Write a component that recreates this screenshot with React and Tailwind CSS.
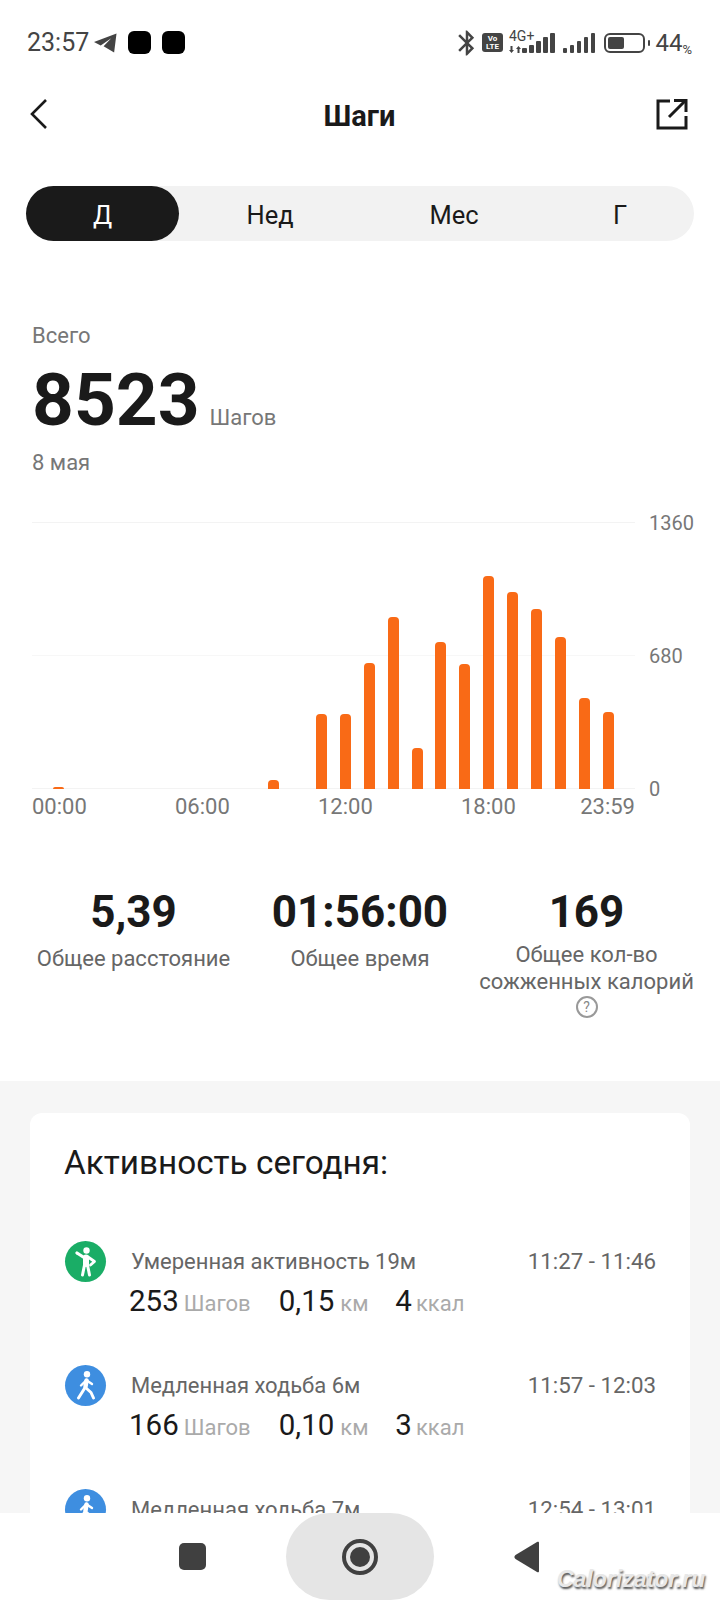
import React from 'react';
import { MdBluetooth } from 'react-icons/md';

const bars = [2, 0, 0, 0, 0, 0, 0, 0, 0, 9, 0, 75, 75, 126, 172, 41, 147, 125, 213, 197, 180, 152, 91, 77];

const activities = [
  { kind: 'green', title: 'Умеренная активность 19м', time: '11:27 - 11:46', steps: '253', km: '0,15', kcal: '4' },
  { kind: 'blue', title: 'Медленная ходьба 6м', time: '11:57 - 12:03', steps: '166', km: '0,10', kcal: '3' },
  { kind: 'blue', title: 'Медленная ходьба 7м', time: '12:54 - 13:01' },
];

function SignalBars({ heights }) {
  return (
    <div className="flex items-end gap-[2.5px]">
      {heights.map((h, i) => (
        <div key={i} className="w-[4.5px] rounded-[1px] bg-[#444]" style={{ height: h }} />
      ))}
    </div>
  );
}

function StatusBar() {
  return (
    <div className="h-[85px] shrink-0 flex items-center justify-between pl-[27px] pr-[28px] text-[#444]">
      <div className="flex items-center">
        <span className="text-[25px] leading-none">23:57</span>
        <svg className="ml-[5px]" width="23" height="20" viewBox="0 0 24 20" fill="#444">
          <path d="M23.5 0 L0 9 L7 12.5 L18 5 L10 13.5 L21 20 Z" />
        </svg>
        <div className="ml-[11px] w-[23px] h-[23px] rounded-[6px] bg-black" />
        <div className="ml-[11px] w-[23px] h-[23px] rounded-[6px] bg-black" />
      </div>
      <div className="flex items-center">
        <MdBluetooth className="w-[30px] h-[30px]" />
        <div className="w-[21px] h-[19px] rounded-[3px] bg-[#444] flex flex-col items-center justify-center text-white text-[8px] leading-[8px] font-bold">
          <span>Vo</span>
          <span>LTE</span>
        </div>
        <div className="ml-[6px] relative w-[46px] h-[21px] flex items-end justify-end">
          <span className="absolute left-0 -top-[3px] text-[14px] leading-none">4G+</span>
          <svg className="absolute left-0 bottom-0" width="12" height="7" viewBox="0 0 12 7" fill="#444">
            <path d="M0 4 L2.5 7 L5 4 L3.5 4 L3.5 0 L1.5 0 L1.5 4 Z" />
            <path d="M7 3 L9.5 0 L12 3 L10.5 3 L10.5 7 L8.5 7 L8.5 3 Z" />
          </svg>
          <SignalBars heights={[5, 8, 12, 16, 20]} />
        </div>
        <div className="ml-[8px]">
          <SignalBars heights={[5, 8, 12, 16, 20]} />
        </div>
        <div className="ml-[9px] w-[41px] h-[20px] rounded-[6px] border-2 border-[#444] p-[2px]">
          <div className="w-[16px] h-full rounded-[2px] bg-[#444]" />
        </div>
        <div className="ml-[3px] w-[2px] h-[6px] rounded-[1px] bg-[#444]" />
        <span className="ml-[5px] text-[24px] leading-none">44</span>
        <span className="text-[13px] leading-none self-end mb-[2px]">%</span>
      </div>
    </div>
  );
}

function Header() {
  return (
    <div className="h-[58px] shrink-0 flex items-center justify-between pl-[27px] pr-[32px]">
      <div className="w-[34px]">
        <svg width="24" height="34" viewBox="0 0 24 34" fill="none" stroke="#1a1a1a" strokeWidth="2.6">
          <path d="M19 3 L5 17 L19 31" />
        </svg>
      </div>
      <div className="mt-[4px] ml-[4px] text-[29px] font-bold text-[#1a1a1a] leading-none">Шаги</div>
      <div className="w-[34px] flex justify-end">
        <svg width="32" height="32" viewBox="0 0 32 32" fill="none" stroke="#1a1a1a" strokeWidth="3">
          <path d="M14 3 H2 V30 H30 V18" />
          <path d="M13 19 L29 3" />
          <path d="M18 2.5 H30 V14" />
        </svg>
      </div>
    </div>
  );
}

function Tabs() {
  return (
    <div className="mt-[43px] mx-[26px] h-[55px] shrink-0 rounded-full bg-[#f2f2f2] flex items-center text-[25.5px] text-[#1a1a1a]">
      <div className="w-[153px] h-full rounded-full bg-[#1a1a1a] text-white flex items-center justify-center pt-[3px]">Д</div>
      <div className="w-[184px] text-center pr-[2px] pt-[3px]">Нед</div>
      <div className="w-[184px] text-center pr-[2px] pt-[3px]">Мес</div>
      <div className="w-[147px] text-center pr-[1px] pt-[3px]">Г</div>
    </div>
  );
}

function Chart() {
  return (
    <div className="mt-[45px] ml-[32px] mr-[26px] shrink-0">
      <div className="flex">
        <div className="relative w-[603px] h-[267px] flex flex-col justify-between">
          <div className="h-px bg-[#f3f3f3]" />
          <div className="h-px bg-[#f7f7f7]" />
          <div className="h-px bg-[#f3f3f3]" />
          <div className="absolute inset-x-0 bottom-0 top-0 px-[15px] flex items-end">
            {bars.map((h, i) => (
              <div key={i} className="flex-1 flex justify-center">
                {h > 0 && <div className="w-[11px] rounded-t-[4px] bg-[#f96a16]" style={{ height: h }} />}
              </div>
            ))}
          </div>
        </div>
        <div className="ml-[14px] h-[267px] pt-[1px] flex flex-col justify-between text-[20px] leading-[0px] text-[#777]">
          <span>1360</span>
          <span>680</span>
          <span>0</span>
        </div>
      </div>
      <div className="w-[603px] mt-[5px] flex text-[22px] leading-[26px] text-[#777]">
        <span className="w-[143px]">00:00</span>
        <span className="w-[143px]">06:00</span>
        <span className="w-[143px]">12:00</span>
        <span>18:00</span>
        <span className="ml-auto">23:59</span>
      </div>
    </div>
  );
}

function Stats() {
  return (
    <div className="mt-[66px] h-[195px] shrink-0 flex text-center">
      <div className="w-[267px] shrink-0">
        <div className="text-[44px] leading-[52px] font-bold text-[#1a1a1a]">5,39</div>
        <div className="mt-[7px] text-[22px] leading-[28px] text-[#666]">Общее расстояние</div>
      </div>
      <div className="w-[186px] shrink-0">
        <div className="text-[44px] leading-[52px] font-bold text-[#1a1a1a]">01:56:00</div>
        <div className="mt-[7px] text-[22px] leading-[28px] text-[#666]">Общее время</div>
      </div>
      <div className="w-[267px] shrink-0 flex flex-col items-center">
        <div className="text-[44px] leading-[52px] font-bold text-[#1a1a1a]">169</div>
        <div className="mt-[3px] text-[22px] leading-[27px] text-[#666]">
          Общее кол-во
          <br />
          сожженных калорий
        </div>
        <div className="mt-[1px] w-[22px] h-[22px] rounded-full border-2 border-[#999] flex items-center justify-center text-[14px] leading-none text-[#888]">?</div>
      </div>
    </div>
  );
}

function ModerateIcon() {
  return (
    <svg width="24" height="30" viewBox="0 0 24 30" fill="none" stroke="white" strokeLinecap="round" strokeLinejoin="round">
      <circle cx="12.5" cy="3.5" r="3.2" fill="white" stroke="none" />
      <path d="M10 10.5 L3 6" strokeWidth="3.2" />
      <path d="M14 10 L20.5 14.5 L16.5 18" strokeWidth="2.8" />
      <path d="M12 10.5 L12 17" strokeWidth="6" />
      <path d="M10.5 18 L8.5 28" strokeWidth="3" />
      <path d="M13.5 18 L15.5 28" strokeWidth="3" />
    </svg>
  );
}

function WalkIcon() {
  return (
    <svg width="20" height="29" viewBox="0 0 20 29" fill="none" stroke="white" strokeLinecap="round" strokeLinejoin="round">
      <circle cx="11" cy="3.3" r="3.2" fill="white" stroke="none" />
      <path d="M10.5 9.5 L9.5 15.5" strokeWidth="4.5" />
      <path d="M9.5 10 L5 14.5" strokeWidth="2.4" />
      <path d="M11.5 10 L16 13" strokeWidth="2.4" />
      <path d="M8.8 17 L2.5 27" strokeWidth="3" />
      <path d="M10 17 L15 21.5 L17.5 27" strokeWidth="3" />
    </svg>
  );
}

function ActivityRow({ item }) {
  return (
    <div className="h-[124px] shrink-0 ml-[1px]">
      <div className="flex items-center">
        <div className={`w-[41px] h-[41px] shrink-0 rounded-full flex items-center justify-center ${item.kind === 'green' ? 'bg-[#1aad66]' : 'bg-[#3e8ee0]'}`}>
          {item.kind === 'green' ? <ModerateIcon /> : <WalkIcon />}
        </div>
        <div className="ml-[25px] flex-1 flex items-center justify-between text-[22px] leading-[28px] text-[#666]">
          <span>{item.title}</span>
          <span className="text-[22.3px] -mt-[1px]">{item.time}</span>
        </div>
      </div>
      {item.steps && (
        <div className="mt-[1px] ml-[64px] flex items-baseline text-[#1a1a1a] text-[29.5px] leading-[36px]">
          <span>{item.steps}</span>
          <span className="ml-[5px] w-[95px] text-[22px] text-[#aaa]">Шагов</span>
          <span>{item.km}</span>
          <span className="ml-[6px] w-[55px] text-[22px] text-[#aaa]">км</span>
          <span>{item.kcal}</span>
          <span className="ml-[4px] text-[22px] text-[#aaa]">ккал</span>
        </div>
      )}
    </div>
  );
}

function ActivityCard() {
  return (
    <div className="flex-1 min-h-0 overflow-hidden bg-[#f6f6f6] pt-[32px] px-[30px]">
      <div className="bg-white rounded-t-[12px] pt-[32px] pl-[34px] pr-[34px]">
        <div className="text-[33.3px] leading-[36px] text-[#1a1a1a]">Активность сегодня:</div>
        <div className="mt-[60px]">
          {activities.map((item, i) => (
            <ActivityRow key={i} item={item} />
          ))}
        </div>
      </div>
    </div>
  );
}

function NavBar() {
  return (
    <div className="relative h-[87px] shrink-0 bg-white pr-[2px] flex justify-center items-center">
      <div className="w-[27px] h-[27px] rounded-[5px] bg-[#404040]" />
      <div className="ml-[80px] w-[148px] h-full rounded-[44px] bg-[#e5e5e5] flex items-center justify-center">
        <div className="w-[36px] h-[36px] rounded-full border-[4px] border-[#404040] flex items-center justify-center">
          <div className="w-[20px] h-[20px] rounded-full bg-[#404040]" />
        </div>
      </div>
      <svg className="ml-[80px]" width="26" height="32" viewBox="0 0 26 32" fill="#404040">
        <path d="M25 2 C25 0.5 24 0.5 23 1 L1.5 14 C0 15 0 17 1.5 18 L23 31 C24 31.5 25 31.5 25 30 Z" />
      </svg>
      <span className="absolute left-[557px] top-[55px] text-[23px] leading-[22px] font-bold italic text-[#e8e8e8] [text-shadow:1px_2px_2px_#555] [font-family:'Liberation_Sans',sans-serif]">
        Calorizator.ru
      </span>
    </div>
  );
}

export default function App() {
  return (
    <div className="w-[720px] h-[1600px] overflow-hidden flex flex-col bg-white font-['Roboto',sans-serif]">
      <StatusBar />
      <Header />
      <Tabs />
      <div className="mt-[81px] ml-[32px] shrink-0">
        <div className="text-[22px] leading-[28px] text-[#777]">Всего</div>
        <div className="mt-[8px] flex items-baseline">
          <span className="text-[73px] leading-[84px] font-bold text-[#1a1a1a]">8523</span>
          <span className="ml-[10px] text-[22px] text-[#777]">Шагов</span>
        </div>
        <div className="mt-[7px] text-[22px] leading-[28px] text-[#777]">8 мая</div>
      </div>
      <Chart />
      <Stats />
      <ActivityCard />
      <NavBar />
    </div>
  );
}
